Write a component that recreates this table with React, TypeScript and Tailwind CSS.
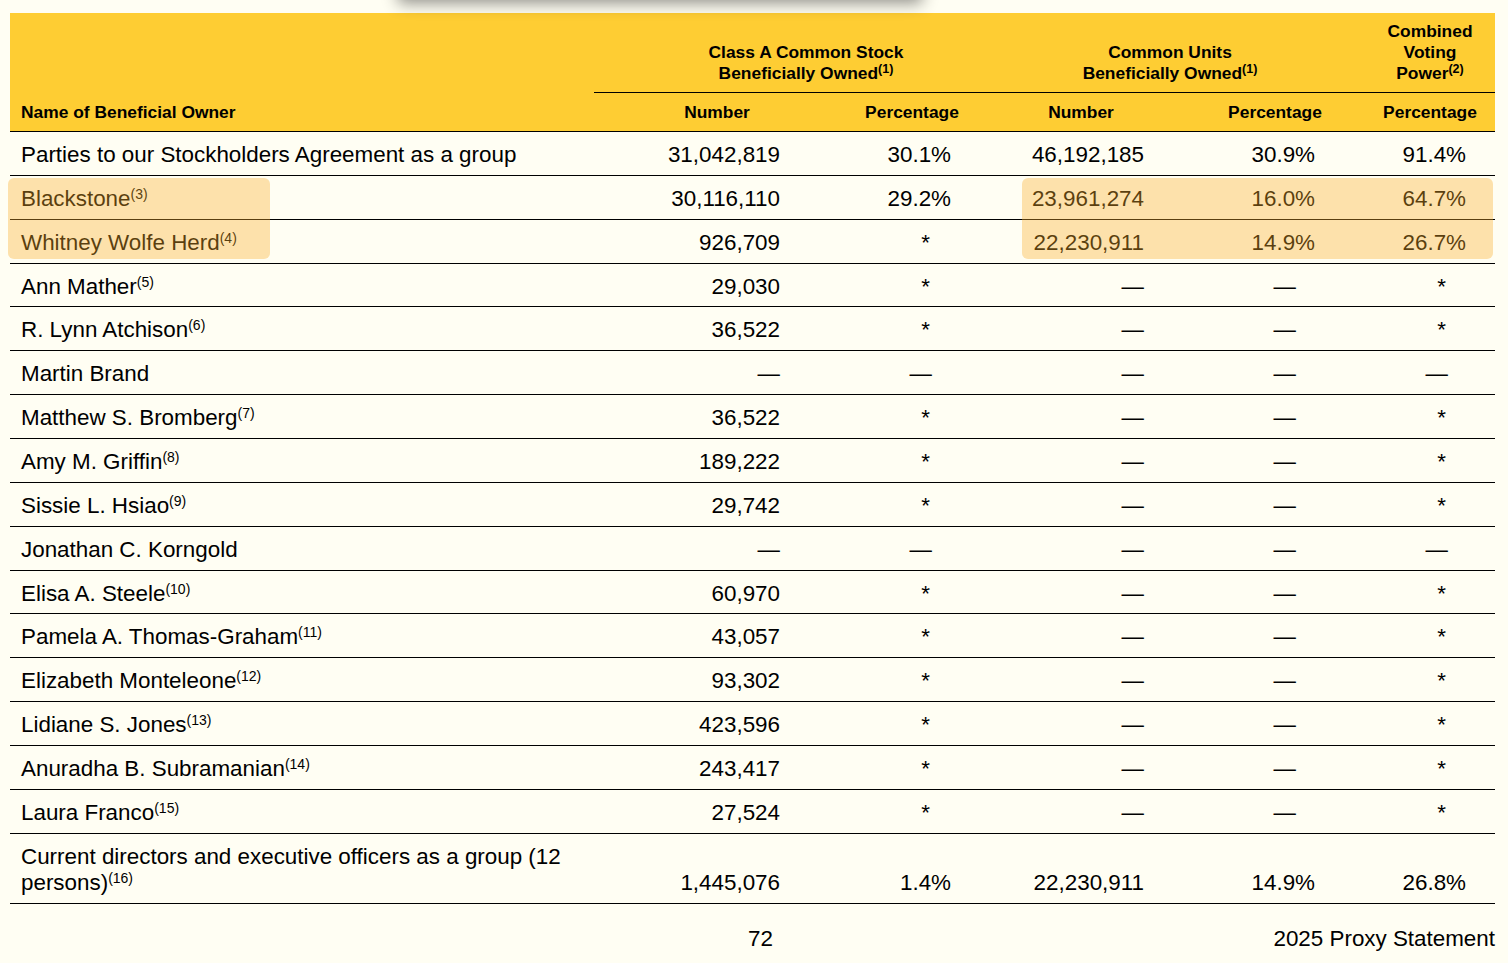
import React from "react";

type Cell = string;
type Row = { name: string; sup?: string; vals: Cell[] };

const rows: Row[] = [
  { name: "Parties to our Stockholders Agreement as a group", vals: ["31,042,819", "30.1%", "46,192,185", "30.9%", "91.4%"] },
  { name: "Blackstone", sup: "(3)", vals: ["30,116,110", "29.2%", "23,961,274", "16.0%", "64.7%"] },
  { name: "Whitney Wolfe Herd", sup: "(4)", vals: ["926,709", "*", "22,230,911", "14.9%", "26.7%"] },
  { name: "Ann Mather", sup: "(5)", vals: ["29,030", "*", "—", "—", "*"] },
  { name: "R. Lynn Atchison", sup: "(6)", vals: ["36,522", "*", "—", "—", "*"] },
  { name: "Martin Brand", vals: ["—", "—", "—", "—", "—"] },
  { name: "Matthew S. Bromberg", sup: "(7)", vals: ["36,522", "*", "—", "—", "*"] },
  { name: "Amy M. Griffin", sup: "(8)", vals: ["189,222", "*", "—", "—", "*"] },
  { name: "Sissie L. Hsiao", sup: "(9)", vals: ["29,742", "*", "—", "—", "*"] },
  { name: "Jonathan C. Korngold", vals: ["—", "—", "—", "—", "—"] },
  { name: "Elisa A. Steele", sup: "(10)", vals: ["60,970", "*", "—", "—", "*"] },
  { name: "Pamela A. Thomas-Graham", sup: "(11)", vals: ["43,057", "*", "—", "—", "*"] },
  { name: "Elizabeth Monteleone", sup: "(12)", vals: ["93,302", "*", "—", "—", "*"] },
  { name: "Lidiane S. Jones", sup: "(13)", vals: ["423,596", "*", "—", "—", "*"] },
  { name: "Anuradha B. Subramanian", sup: "(14)", vals: ["243,417", "*", "—", "—", "*"] },
  { name: "Laura Franco", sup: "(15)", vals: ["27,524", "*", "—", "—", "*"] },
];

const colW = ["w-[212px]", "w-[212px]", "w-[152px]", "w-[195px]", "w-[130px]"];

function padFor(col: number, v: string): string {
  const kind = v === "*" ? "star" : v === "—" ? "dash" : "num";
  if (col === 0) return "pr-[26px]";
  if (col === 1) return kind === "num" ? "pr-[67px]" : kind === "star" ? "pr-[88px]" : "pr-[86px]";
  if (col === 2) return "pr-[26px]";
  if (col === 3) return kind === "dash" ? "pr-[69px]" : "pr-[50px]";
  return kind === "num" ? "pr-[29px]" : kind === "star" ? "pr-[49px]" : "pr-[47px]";
}

function Sup({ children, header }: { children: React.ReactNode; header?: boolean }) {
  return header ? (
    <sup className="text-[12.5px] font-bold -top-[0.5em] leading-none">{children}</sup>
  ) : (
    <sup className="text-[14px] -top-[0.5em] leading-none">{children}</sup>
  );
}

export default function App() {
  return (
    <div className="relative min-h-[963px] w-full bg-[#fffef3] text-black font-['Liberation_Sans',Arial,sans-serif] overflow-hidden">
      {/* floating bar shadow at top */}
      <div className="absolute left-[398px] top-[-40px] w-[524px] h-[40px] bg-[#fffef3] shadow-[0_3px_16px_rgba(0,0,0,0.45)] z-10" />

      <div className="relative pt-[13px] pl-[10px] w-[1495px]">
        {/* Header */}
        <div className="flex w-[1485px] h-[119px] bg-[#fecd33] border-b border-black">
          <div className="w-[584px] flex items-end pl-[11px] pb-[8px] text-[17.4px] leading-[21px] font-bold">
            Name of Beneficial Owner
          </div>
          <div className="w-[901px] flex flex-col">
            <div className="h-[80px] flex border-b border-black text-[17.4px] leading-[21px] font-bold">
              <div className="w-[424px] flex items-end justify-center pb-[8px] text-center">
                <div>
                  Class A Common Stock
                  <br />
                  Beneficially Owned<Sup header>(1)</Sup>
                </div>
              </div>
              <div className="w-[347px] flex items-end justify-center pb-[8px] pr-[43px] text-center">
                <div>
                  Common Units
                  <br />
                  Beneficially Owned<Sup header>(1)</Sup>
                </div>
              </div>
              <div className="w-[130px] flex items-end justify-center pb-[8px] text-center">
                <div>
                  Combined
                  <br />
                  Voting
                  <br />
                  Power<Sup header>(2)</Sup>
                </div>
              </div>
            </div>
            <div className="flex-1 flex items-center text-[17.4px] font-bold">
              <div className="w-[212px] text-center pl-[34px]">Number</div>
              <div className="w-[212px] text-center">Percentage</div>
              <div className="w-[152px] text-center pr-[26px]">Number</div>
              <div className="w-[195px] text-center pl-[15px]">Percentage</div>
              <div className="w-[130px] text-center">Percentage</div>
            </div>
          </div>
        </div>

        {/* Body rows */}
        {rows.map((r, i) => (
          <div key={i} className="flex w-[1485px] h-[43.87px] pt-[3px] items-center border-b border-black text-[22.4px] leading-[26px]">
            <div className="w-[584px] pl-[11px] whitespace-nowrap">
              {r.name}
              {r.sup && <Sup>{r.sup}</Sup>}
            </div>
            {r.vals.map((v, j) => (
              <div key={j} className={`${colW[j]} text-right ${padFor(j, v)}`}>
                {v}
              </div>
            ))}
          </div>
        ))}

        {/* Last row */}
        <div className="flex w-[1485px] h-[70px] items-end pb-[7px] border-b border-black text-[22.4px] leading-[26px]">
          <div className="w-[584px] pl-[11px] pr-[20px]">
            Current directors and executive officers as a group (12 persons)<Sup>(16)</Sup>
          </div>
          {["1,445,076", "1.4%", "22,230,911", "14.9%", "26.8%"].map((v, j) => (
            <div key={j} className={`${colW[j]} text-right ${padFor(j, v)}`}>
              {v}
            </div>
          ))}
        </div>

        {/* Footer */}
        <div className="flex w-[1485px] h-[58px] items-center text-[22.4px] leading-[26px] pt-[12px]">
          <div className="w-[738px]" />
          <div>72</div>
          <div className="flex-1 text-right">2025 Proxy Statement</div>
        </div>

        {/* Highlight overlays */}
        <div className="absolute left-[8px] top-[178px] w-[262px] h-[81px] rounded-[6px] bg-[rgba(250,175,44,0.36)] pointer-events-none" />
        <div className="absolute left-[1022px] top-[178px] w-[471px] h-[81px] rounded-[6px] bg-[rgba(250,175,44,0.36)] pointer-events-none" />
      </div>
    </div>
  );
}
